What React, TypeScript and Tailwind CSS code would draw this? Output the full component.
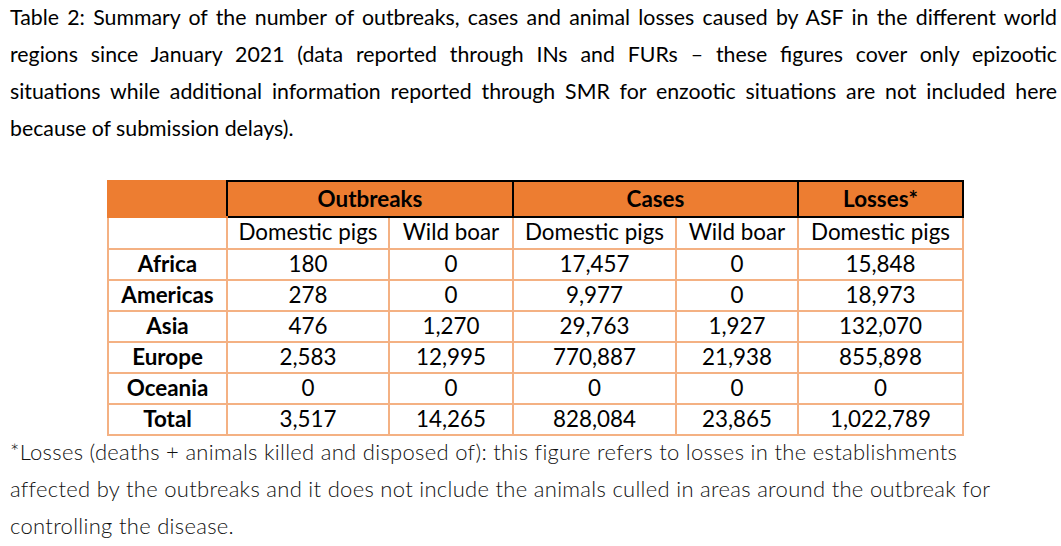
const rows = [
  { region: "Africa", ob: ["180", "0"], cs: ["17,457", "0"], loss: "15,848" },
  { region: "Americas", ob: ["278", "0"], cs: ["9,977", "0"], loss: "18,973" },
  { region: "Asia", ob: ["476", "1,270"], cs: ["29,763", "1,927"], loss: "132,070" },
  { region: "Europe", ob: ["2,583", "12,995"], cs: ["770,887", "21,938"], loss: "855,898" },
  { region: "Oceania", ob: ["0", "0"], cs: ["0", "0"], loss: "0" },
  { region: "Total", ob: ["3,517", "14,265"], cs: ["828,084", "23,865"], loss: "1,022,789" },
];

const captionLines = [
  "Table 2: Summary of the number of outbreaks, cases and animal losses caused by ASF in the different world",
  "regions since January 2021 (data reported through INs and FURs – these figures cover only epizootic",
  "situations while additional information reported through SMR for enzootic situations are not included here",
];

const cell = "border-2 border-[#f4b183] text-center p-0 h-[31px] leading-none";

export default function App() {
  return (
    <div className="w-[1061px] h-[546px] bg-white text-black overflow-hidden font-['Lato','Open_Sans',sans-serif]">
      <div className="pl-[10px] pr-[4px] -mt-[1px] text-[21.3px] leading-[37px]">
        {captionLines.map((l) => (
          <div key={l} className="whitespace-nowrap text-justify [text-align-last:justify]">
            {l}
          </div>
        ))}
        <div>because of submission delays).</div>
      </div>

      <div className="pl-[107px] pt-[33px]">
        <table className="border-collapse text-[22.4px] table-fixed w-[855px]">
          <colgroup>
            <col className="w-[119px]" />
            <col className="w-[162px]" />
            <col className="w-[124px]" />
            <col className="w-[163px]" />
            <col className="w-[122px]" />
            <col className="w-[165px]" />
          </colgroup>
          <thead>
            <tr className="bg-[#ed7d31] font-bold">
              <th className="border-2 border-[#ed7d31] border-r-black h-[30px]" />
              <th colSpan={2} className="border-2 border-black h-[30px]">Outbreaks</th>
              <th colSpan={2} className="border-2 border-black h-[30px]">Cases</th>
              <th className="border-2 border-black h-[30px]">Losses*</th>
            </tr>
            <tr>
              <th className={cell + " h-[32px]"} />
              <th className={cell + " h-[32px] font-normal"}>Domestic pigs</th>
              <th className={cell + " h-[32px] font-normal"}>Wild boar</th>
              <th className={cell + " h-[32px] font-normal"}>Domestic pigs</th>
              <th className={cell + " h-[32px] font-normal"}>Wild boar</th>
              <th className={cell + " h-[32px] font-normal"}>Domestic pigs</th>
            </tr>
          </thead>
          <tbody>
            {rows.map((r) => (
              <tr key={r.region}>
                <td className={cell + " font-bold"}>{r.region}</td>
                <td className={cell}>{r.ob[0]}</td>
                <td className={cell}>{r.ob[1]}</td>
                <td className={cell}>{r.cs[0]}</td>
                <td className={cell}>{r.cs[1]}</td>
                <td className={cell}>{r.loss}</td>
              </tr>
            ))}
          </tbody>
        </table>
      </div>

      <p className="pl-[10px] -mt-[3px] text-[22px] tracking-[0.3px] leading-[37px] font-light text-[#111] whitespace-nowrap">
        *Losses (deaths + animals killed and disposed of): this figure refers to losses in the establishments
        <br />
        affected by the outbreaks and it does not include the animals culled in areas around the outbreak for
        <br />
        controlling the disease.
      </p>
    </div>
  );
}
